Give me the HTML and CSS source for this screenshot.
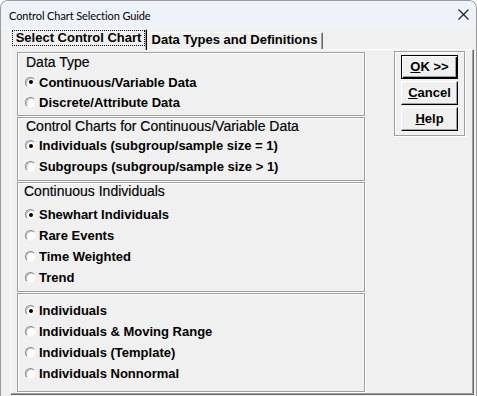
FILE: index.html
```html
<!DOCTYPE html>
<html>
<head>
<meta charset="utf-8">
<link rel="stylesheet" href="styles.css">
</head>
<body>
<div class="window">
  <div class="titlebar">
    <span class="title">Control Chart Selection Guide</span>
    <svg class="close" width="11" height="11" viewBox="0 0 11 11"><path d="M0.5 0.5 L10.5 10.5 M10.5 0.5 L0.5 10.5" stroke="#1a1a1a" stroke-width="1.1" fill="none"/></svg>
  </div>
  <div class="tabs">
    <div class="tab active"><span class="focus">Select Control Chart</span></div>
    <div class="tab">Data Types and Definitions</div>
  </div>
  <div class="page">
    <div class="left">
      <div class="frame f1">
        <div class="hdr h1">Data Type</div>
        <div class="opt r20"><span class="radio on"></span>Continuous/Variable Data</div>
        <div class="opt r20"><span class="radio"></span>Discrete/Attribute Data</div>
      </div>
      <div class="frame f2">
        <div class="hdr h2">Control Charts for Continuous/Variable Data</div>
        <div class="opt"><span class="radio on"></span>Individuals (subgroup/sample size = 1)</div>
        <div class="opt"><span class="radio"></span>Subgroups (subgroup/sample size &gt; 1)</div>
      </div>
      <div class="frame f3">
        <div class="hdr h3">Continuous Individuals</div>
        <div class="opt"><span class="radio on"></span>Shewhart Individuals</div>
        <div class="opt"><span class="radio"></span>Rare Events</div>
        <div class="opt"><span class="radio"></span>Time Weighted</div>
        <div class="opt"><span class="radio"></span>Trend</div>
      </div>
      <div class="frame f4">
        <div class="opt"><span class="radio on"></span>Individuals</div>
        <div class="opt"><span class="radio"></span>Individuals &amp; Moving Range</div>
        <div class="opt"><span class="radio"></span>Individuals (Template)</div>
        <div class="opt"><span class="radio"></span>Individuals Nonnormal</div>
      </div>
    </div>
    <div class="btnbox">
      <div class="btn default"><u>O</u>K &gt;&gt;</div>
      <div class="btn"><u>C</u>ancel</div>
      <div class="btn"><u>H</u>elp</div>
    </div>
  </div>
</div>
</body>
</html>
```
FILE: styles.css
```css
html, body {
  margin: 0;
  padding: 0;
}
body {
  background: #ffffff;
  font-family: "Liberation Sans", Arial, sans-serif;
  color: #000;
}
.window {
  box-sizing: border-box;
  width: 477px;
  height: 396px;
  border: 1px solid #9c9c9c;
  border-bottom: none;
  border-radius: 8px 8px 0 0;
  background: #f0f0f0;
  overflow: hidden;
  display: flex;
  flex-direction: column;
}
.titlebar {
  flex: none;
  height: 28px;
  background: #eef3f9;
  display: flex;
  align-items: center;
  justify-content: space-between;
  padding: 0 7px 0 8px;
}
.title {
  font-family: Lato, "Liberation Sans", sans-serif;
  font-size: 11px;
  letter-spacing: -0.1px;
  color: #000;
}
.close {
  display: block;
  margin-top: -1px;
}
.tabs {
  flex: none;
  height: 20px;
  display: flex;
  align-items: flex-end;
  padding-left: 9px;
  position: relative;
  z-index: 2;
}
.tab {
  box-sizing: border-box;
  font-size: 13px;
  font-weight: bold;
  text-align: center;
  background: #f0f0f0;
}
.tab.active {
  width: 137px;
  height: 21px;
  margin-bottom: -1px;
  border-top: 1px solid #ffffff;
  border-left: 1px solid #ffffff;
  border-right: 1px solid #000000;
  box-shadow: inset -1px 0 0 #a0a0a0;
  padding: 1px 2px 0 2px;
}
.focus {
  display: block;
  height: 14px;
  line-height: 14px;
  outline: 1px dotted #000;
  outline-offset: 0;
}
.tab:not(.active) {
  width: 176px;
  height: 17px;
  line-height: 11px;
  padding-top: 1px;
  border-top: 1px solid #ffffff;
  border-right: 1px solid #696969;
  box-shadow: inset -1px 0 0 #a0a0a0;
}
.page {
  flex: 1;
  margin: 0 2px 1px 9px;
  border-top: 1px solid #ffffff;
  border-left: 1px solid #ffffff;
  border-right: 1px solid #696969;
  border-bottom: 1px solid #696969;
  box-shadow: inset -1px -1px 0 #a0a0a0;
  display: flex;
  align-items: flex-start;
  gap: 29px;
  padding-left: 6px;
}
.left {
  width: 348px;
  padding-top: 2px;
  display: flex;
  flex-direction: column;
  gap: 1px;
}
.frame {
  box-sizing: border-box;
  border: 1px solid #a0a0a0;
  box-shadow: inset 1px 1px 0 #ffffff, 1px 1px 0 #ffffff;
  background: #f0f0f0;
}
.f1 { height: 64px; }
.f2 { height: 64px; }
.f3 { height: 110px; }
.f4 { height: 99px; padding-top: 6px; }
.hdr {
  font-size: 14px;
  padding-left: 8px;
  white-space: nowrap;
  -webkit-text-stroke: 0.15px #000;
}
.h1 { height: 19px; line-height: 19px; }
.h2 { height: 17px; line-height: 17px; }
.h3 { height: 16px; line-height: 16px; margin-bottom: 5px; padding-left: 6px; }
.opt {
  height: 21px;
  display: flex;
  align-items: center;
  padding-left: 7px;
  font-size: 13px;
  font-weight: bold;
  white-space: nowrap;
}
.opt.r20 { height: 20px; }
.radio {
  box-sizing: border-box;
  flex: none;
  width: 11px;
  height: 11px;
  border-radius: 50%;
  background: #ffffff;
  border: 1px solid;
  border-color: #8a8a8a #f4f4f4 #f4f4f4 #8a8a8a;
  box-shadow: inset 1px 1px 0 #c8c8c8;
  margin-right: 3px;
  position: relative;
}
.radio.on::after {
  content: "";
  position: absolute;
  left: 2.5px;
  top: 2.5px;
  width: 4px;
  height: 4px;
  border-radius: 50%;
  background: #000;
}
.btnbox {
  box-sizing: border-box;
  width: 71px;
  height: 85px;
  margin-top: 1px;
  border: 1px solid #a0a0a0;
  box-shadow: inset 1px 1px 0 #ffffff, 1px 1px 0 #ffffff;
  padding: 3px 0 0 6px;
  display: flex;
  flex-direction: column;
  gap: 2px;
}
.btn {
  box-sizing: border-box;
  width: 57px;
  height: 24px;
  line-height: 21px;
  text-align: center;
  font-size: 13px;
  font-weight: bold;
  background: #f0f0f0;
  border: 1px solid;
  border-color: #ffffff #000000 #000000 #ffffff;
  box-shadow: inset -1px -1px 0 #a0a0a0;
}
.btn.default {
  border: 1px solid #000000;
  box-shadow: inset 1px 1px 0 #ffffff, inset -1px -1px 0 #000000, inset -2px -2px 0 #a0a0a0;
}
.btn u {
  text-decoration-thickness: 1px;
  text-underline-offset: 1px;
}
```
